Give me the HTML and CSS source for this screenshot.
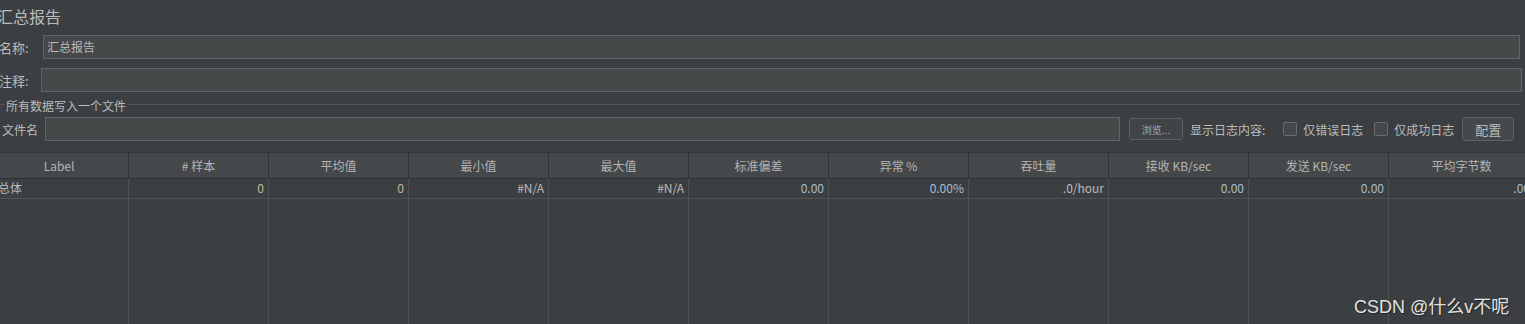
FILE: index.html
```html
<!DOCTYPE html>
<html lang="zh-CN">
<head>
    <meta charset="UTF-8">
    <meta name="viewport" content="width=device-width, initial-scale=1.0">
    <title>汇总报告</title>
    <link rel="stylesheet" href="styles.css">
</head>
<body>

<div class="panel">
    <div class="title">汇总报告</div>

    <div class="row">
        <span class="label label-name">名称:</span>
        <div class="field field-name">汇总报告</div>
    </div>

    <div class="row row-comment">
        <span class="label label-comment">注释:</span>
        <div class="field field-comment"></div>
    </div>

    <div class="group-title">
        <span class="group-line short"></span>
        <span class="group-text">所有数据写入一个文件</span>
        <span class="group-line"></span>
    </div>

    <div class="row">
        <span class="label label-file">文件名</span>
        <div class="field field-file"></div>
        <button class="btn btn-browse">浏览...</button>
        <span class="log-label">显示日志内容:</span>
        <span class="check"></span>
        <span class="check-text">仅错误日志</span>
        <span class="check"></span>
        <span class="check-text">仅成功日志</span>
        <button class="btn btn-config">配置</button>
    </div>
</div>

<div class="table">
    <div class="col col-first">
        <div class="head">Label</div>
        <div class="cell left">总体</div>
        <div class="fill"></div>
    </div>
    <div class="col">
        <div class="head"># 样本</div>
        <div class="cell warm">0</div>
        <div class="fill"></div>
    </div>
    <div class="col">
        <div class="head">平均值</div>
        <div class="cell warm">0</div>
        <div class="fill"></div>
    </div>
    <div class="col">
        <div class="head">最小值</div>
        <div class="cell">#N/A</div>
        <div class="fill"></div>
    </div>
    <div class="col">
        <div class="head">最大值</div>
        <div class="cell">#N/A</div>
        <div class="fill"></div>
    </div>
    <div class="col">
        <div class="head">标准偏差</div>
        <div class="cell cool">0.00</div>
        <div class="fill"></div>
    </div>
    <div class="col">
        <div class="head">异常 %</div>
        <div class="cell cool">0.00%</div>
        <div class="fill"></div>
    </div>
    <div class="col">
        <div class="head">吞吐量</div>
        <div class="cell">.0/hour</div>
        <div class="fill"></div>
    </div>
    <div class="col">
        <div class="head">接收 KB/sec</div>
        <div class="cell cool">0.00</div>
        <div class="fill"></div>
    </div>
    <div class="col">
        <div class="head">发送 KB/sec</div>
        <div class="cell cool">0.00</div>
        <div class="fill"></div>
    </div>
    <div class="col col-last">
        <div class="head">平均字节数</div>
        <div class="cell cool">.00</div>
        <div class="fill"></div>
    </div>
</div>

<div class="watermark">CSDN @什么v不呢</div>

</body>
</html>
```

FILE: styles.css
```css
html, body { margin: 0; height: 324px; overflow: hidden; }
body { background: #3c3f41; color: #bbbbbb; font-family: "Noto Sans CJK SC", "Noto Sans", sans-serif; font-size: 12px; position: relative; }

.panel { width: 1525px; }
.title { height: 35px; line-height: 32px; font-size: 16px; margin-left: -3px; }

.row { display: flex; align-items: center; height: 24px; }
.row-comment { margin-top: 9px; }
.label { font-size: 13px; flex: none; }
.label-name { width: 44px; margin-left: -1px; }
.label-comment { width: 42px; margin-left: -1px; }
.label-file { width: 43px; margin-left: 2px; font-size: 12px; }

.field { height: 24px; box-sizing: border-box; background: #45494a; border: 1px solid #646464; padding-left: 3px; line-height: 21px; flex: none; }
.field-name { width: 1477px; }
.field-comment { width: 1481px; }
.field-file { width: 1075px; }

.group-title { display: flex; align-items: center; height: 25px; }
.group-line { flex: 1; height: 1px; background: #55585a; margin-right: 4px; }
.group-line.short { flex: none; width: 4px; margin-right: 0; }
.group-text { padding: 0 3px 0 2px; font-size: 12px; margin-top: 1px; }

.btn { font-family: inherit; color: #bbbbbb; background: #414446; border: 1px solid #5e6162; border-radius: 3px; padding: 0; flex: none; }
.btn-browse { width: 54px; height: 22px; margin-left: 9px; font-size: 10px; color: #a9a9a9; }
.btn-config { width: 52px; height: 24px; margin-left: 8px; font-size: 13px; background: #45494b; }

.log-label { margin-left: 7px; font-size: 12px; }
.check { width: 14px; height: 14px; box-sizing: border-box; border: 1px solid #6b6b6b; border-radius: 2px; background: #43494a; flex: none; }
.log-label + .check { margin-left: 18px; }
.check-text { margin-left: 6px; font-size: 12px; }
.check-text + .check { margin-left: 11px; }

.table { display: flex; margin-top: 11px; height: 172px; width: 1600px; }
.col { display: flex; flex-direction: column; width: 140px; flex: none; }
.col-first { width: 129px; }
.col-first .head { padding-right: 10px; }
.col-last { width: 146px; }
.head { height: 27px; box-sizing: border-box; background: #45484a; border-top: 1px solid #333537; border-bottom: 1px solid #2f3133; border-right: 1px solid #2f3133; text-align: center; line-height: 25px; font-size: 12px; color: #b4b4b4; }
.cell { height: 20px; box-sizing: border-box; border-bottom: 1px solid #505355; border-right: 1px solid #505355; text-align: right; padding-right: 4px; line-height: 18px; white-space: nowrap; }
.cell.left { text-align: left; padding-left: 0; margin-left: -2px; }
.cell.warm { color: #c4b59c; }
.cell.cool { color: #a9bccf; }
.fill { flex: 1; border-right: 1px solid #505355; }

.watermark { position: absolute; left: 1354px; top: 292px; font-family: "Liberation Sans", "Noto Sans CJK SC", sans-serif; font-size: 18px; color: #e2e2e2; text-shadow: 1px 1px 1px #222; white-space: nowrap; }
```
